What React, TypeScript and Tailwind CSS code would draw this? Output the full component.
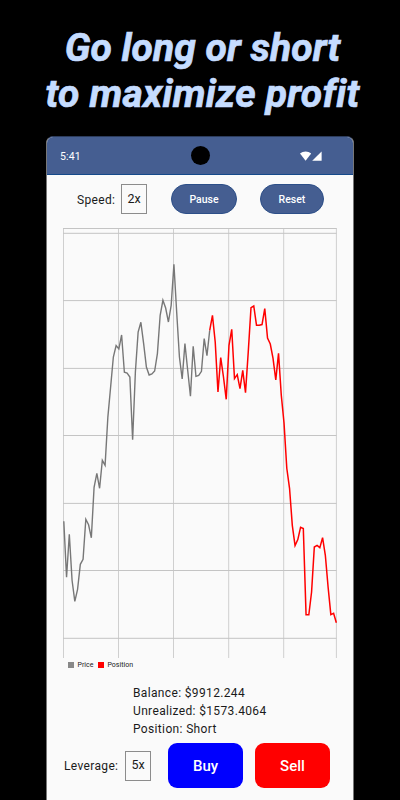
import React from 'react';

const FIRST_POSITION = 53;
const STEP = 2.753;

// one sample per tick, in chart pixels from the top
const samples = [
  293, 349, 306, 352, 373, 361, 336, 331, 291, 296.5, 309.5, 259, 245, 260, 232, 237, 189, 159, 128.7, 117.3,
  120.7, 106.7, 144, 144.7, 148.7, 211.5, 143.7, 103.7, 94, 115.3, 138.7, 146.7, 145.7, 142.7, 125.3, 87, 72, 79.7,
  93.7, 77, 36, 83.7, 128.7, 150.7, 115.3, 142, 168, 118, 148, 147, 143, 110.3, 127.3, 102, 87, 113.7, 163.7,
  129.3, 148.7, 171, 117, 101, 150.3, 146.3, 160.3, 142, 164.3, 123.7, 79.3, 77.7, 97, 97, 96.3, 80.3, 109.7,
  115.7, 130, 151.7, 125, 167, 195, 240, 260, 297, 317.3, 311.3, 299, 300.3, 386.5, 386.5, 363.7, 318.7, 317,
  319.3, 309.3, 327, 358.7, 386.3, 385, 394.5,
];

const columns = [0.5, 55.5, 110.5, 165.7, 220.7, 273.4];
const rows = [0.5, 5.3, 72.6, 140.4, 207.5, 275.4, 342.5, 410.3];

const toPoints = (from: number, to: number) =>
  samples
    .slice(from, to)
    .map((y, i) => `${(0.8 + (from + i) * STEP).toFixed(2)},${y + 0.3}`)
    .join(' ');

const Chart: React.FC = () => (
  <svg className="block h-[430px] w-[274px]" viewBox="0 0 274 430" fill="none">
    {columns.map((x) => (
      <path key={x} d={`M${x} 0V430`} stroke="#cfcfcf" />
    ))}
    {rows.map((y) => (
      <path key={y} d={`M0 ${y}H273.5`} stroke="#c4c4c4" />
    ))}
    <polyline points={toPoints(0, FIRST_POSITION + 1)} stroke="#777777" strokeWidth="1.4" />
    <polyline points={toPoints(FIRST_POSITION, samples.length)} stroke="#ff0000" strokeWidth="1.5" />
  </svg>
);

const StatusBar: React.FC = () => (
  <div className="relative flex h-[38px] items-center justify-between border-b border-[#14498a] bg-[#455e91] pl-[13px] pr-[31px] pt-[2px]">
    <span className="pt-[2px] text-[10.5px] leading-none tracking-[0.1px] text-white">5:41</span>
    <div className="absolute left-[143.5px] top-[9px] size-[19px] rounded-full bg-black" />
    <svg className="mb-[1px] h-[10px] w-[22px]" viewBox="0 0 22 10" fill="white">
      <path d="M5.6 9.7 0 2.6C3.2-.2 8-.2 11.2 2.6Z" />
      <path d="M12.2 9.8 21.6.4V9.8Z" />
    </svg>
  </div>
);

const PillButton: React.FC<{ label: string; className: string }> = ({ label, className }) => (
  <button
    className={`h-[30px] rounded-full border border-[#2d4f88] bg-[#455e91] pt-[1px] text-[10.5px] font-medium text-white ${className}`}
  >
    {label}
  </button>
);

const ValueBox: React.FC<{ value: string }> = ({ value }) => (
  <div className="flex h-[30px] w-[26px] items-center justify-center border border-[#8c8c8c] text-[12.5px]">{value}</div>
);

export default function App() {
  return (
    <div className="h-[800px] w-[400px] overflow-hidden bg-black font-['Roboto',sans-serif] text-[#1b1b1b]">
      <h1 className="h-[136px] whitespace-nowrap pl-[5px] pt-[25px] text-center text-[39px] font-bold italic leading-[46px] text-[#c5dcff] [-webkit-text-stroke:0.7px_#c5dcff] [font-variant-ligatures:none]">
        <span className="block tracking-[0.05px]">Go long or short</span>
        <span className="block tracking-[0.25px]">to maximize profit</span>
      </h1>

      <div className="ml-[46px] h-[664px] w-[308px] overflow-hidden rounded-t-[7px] border-x border-t border-x-[#777777] border-t-[#2c3c5c] bg-[#fafafa]">
        <StatusBar />

        <div className="flex h-[53px] items-center pb-[5px] pl-[30px]">
          <span className="w-[44px] pt-[1px] text-[12px] tracking-[0.35px]">Speed:</span>
          <ValueBox value="2x" />
          <PillButton label="Pause" className="ml-[24px] w-[66px]" />
          <PillButton label="Reset" className="ml-[23px] w-[64px]" />
        </div>

        <div className="ml-[16px]">
          <Chart />
          <div className="flex h-[13px] items-center pl-[4.5px] text-[7px]">
            <span className="size-[6px] bg-[#888888]" />
            <span className="ml-[4px] w-[20px] pt-[1px]">Price</span>
            <span className="size-[6px] bg-[#ff0000]" />
            <span className="ml-[4px] pt-[1px]">Position</span>
          </div>
        </div>

        <div className="ml-[86px] mt-[13px] text-[12px] leading-[18px] tracking-[0.35px]">
          <p>Balance: $9912.244</p>
          <p>Unrealized: $1573.4064</p>
          <p>Position: Short</p>
        </div>

        <div className="mt-[5px] flex items-center pl-[17px]">
          <span className="w-[61px] pt-[1px] text-[12px] tracking-[0.35px]">Leverage:</span>
          <ValueBox value="5x" />
          <button className="ml-[17px] h-[45px] w-[75px] rounded-[9px] bg-[#0000ff] pt-[1px] text-[15px] font-medium text-white">
            Buy
          </button>
          <button className="ml-[12px] h-[45px] w-[75px] rounded-[9px] bg-[#ff0000] pt-[1px] text-[15px] font-medium text-white">
            Sell
          </button>
        </div>
      </div>
    </div>
  );
}
